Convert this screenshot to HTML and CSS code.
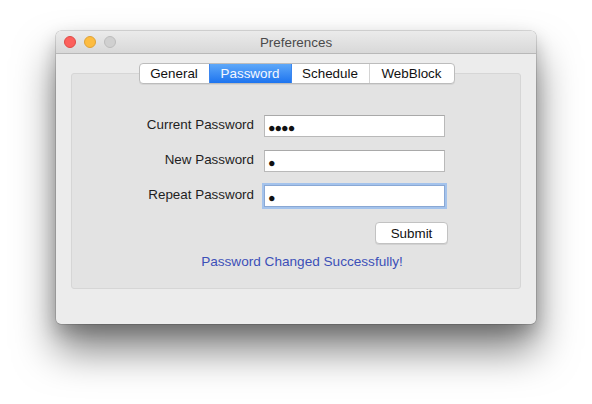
FILE: index.html
```html
<!DOCTYPE html>
<html>
<head>
<meta charset="utf-8">
<link rel="stylesheet" href="styles.css">
</head>
<body>
<div class="window">
  <div class="titlebar">
    <div class="lights">
      <span class="light red"></span>
      <span class="light yellow"></span>
      <span class="light gray"></span>
    </div>
    <div class="title">Preferences</div>
  </div>
  <div class="content">
    <div class="box">
      <div class="tabs">
        <div class="tab t-general">General</div>
        <div class="tab t-password active">Password</div>
        <div class="tab t-schedule">Schedule</div>
        <div class="tab t-webblock">WebBlock</div>
      </div>
      <div class="form">
        <label class="label">Current Password</label>
        <div class="input"><span class="dots">●●●●</span></div>
        <label class="label">New Password</label>
        <div class="input"><span class="dots">●</span></div>
        <label class="label">Repeat Password</label>
        <div class="input focus"><span class="dots">●</span></div>
      </div>
      <div class="actions">
        <button class="submit">Submit</button>
      </div>
      <div class="status">Password Changed Successfully!</div>
    </div>
  </div>
</div>
</body>
</html>
```
FILE: styles.css
```css
html, body {
  margin: 0;
  padding: 0;
  background: #ffffff;
  width: 592px;
  height: 404px;
  overflow: hidden;
}
body {
  padding: 31px 0 0 56px;
  box-sizing: border-box;
  font-family: "Liberation Sans", Arial, sans-serif;
  font-size: 13.4px;
  color: #1a1a1a;
}
.window {
  width: 480px;
  height: 293px;
  background: #ececec;
  border-radius: 5px;
  box-shadow: 0 0 0 0.5px rgba(0,0,0,0.25), 0 26px 40px rgba(0,0,0,0.5), 0 8px 18px rgba(0,0,0,0.2);
  overflow: hidden;
  display: flex;
  flex-direction: column;
}
.titlebar {
  height: 22px;
  flex: none;
  background: linear-gradient(#ebebeb, #d8d8d8);
  border-bottom: 1px solid #b8b8b8;
  position: relative;
  display: flex;
  align-items: center;
  justify-content: center;
}
.lights {
  position: absolute;
  left: 8px;
  top: 5px;
  display: flex;
  gap: 8px;
}
.light {
  width: 12px;
  height: 12px;
  border-radius: 50%;
  box-sizing: border-box;
}
.red { background: #fc605c; border: 1px solid #de4a45; }
.yellow { background: #fdbc40; border: 1px solid #dea236; }
.gray { background: #d0d0d0; border: 1px solid #bcbcbc; }
.title {
  color: #4a4a4a;
  font-size: 13.4px;
  margin-top: 1px;
}
.content {
  padding: 19px 15px 0 15px;
}
.box {
  height: 216px;
  box-sizing: border-box;
  background: #e3e3e3;
  border: 1px solid #d6d6d6;
  border-radius: 3px;
  display: flex;
  flex-direction: column;
}
.tabs {
  align-self: center;
  margin-top: -11px;
  margin-left: 1px;
  display: flex;
  height: 21px;
  box-sizing: border-box;
  border: 1px solid #bcbcbc;
  border-radius: 4px;
  background: #ffffff;
  overflow: hidden;
  box-shadow: 0 1px 0 rgba(0,0,0,0.06);
}
.tab {
  display: flex;
  align-items: center;
  justify-content: center;
  color: #111;
  border-left: 1px solid #d4d4d4;
}
.tab:first-child { border-left: none; }
.t-general { width: 69px; }
.t-password { width: 81px; }
.t-schedule { width: 77px; }
.t-webblock { width: 84px; }
.tab.active {
  background: linear-gradient(#5ea8f9, #1d74ef);
  color: #f4f8ff;
  border-left-color: #3b86f0;
}
.tab.active + .tab { border-left-color: #3b86f0; }
.form {
  margin-top: 31px;
  display: grid;
  grid-template-columns: 182px 181px;
  column-gap: 10px;
  row-gap: 13px;
  align-items: center;
}
.label {
  text-align: right;
  color: #1e1e1e;
  margin-top: -3px;
}
.input {
  height: 22px;
  box-sizing: border-box;
  background: #ffffff;
  border: 1px solid #b9b9b9;
  border-top-color: #a9a9a9;
  display: flex;
  align-items: center;
  padding-left: 3px;
}
.input.focus {
  border: 1px solid #8aa8d4;
  box-shadow: 0 0 0 2px #a4c3ec;
}
.dots {
  font-size: 12.5px;
  letter-spacing: -1px;
  color: #111;
  margin-top: 3px;
}
.actions {
  display: flex;
  justify-content: flex-end;
  padding-right: 72px;
  margin-top: 15px;
}
.submit {
  width: 73px;
  height: 22px;
  background: #ffffff;
  border: 1px solid #c2c2c2;
  border-radius: 4px;
  font-family: "Liberation Sans", Arial, sans-serif;
  font-size: 13.4px;
  color: #111;
  padding: 0;
  box-shadow: 0 1px 0 rgba(0,0,0,0.08);
}
.status {
  text-align: center;
  margin-top: 10px;
  padding-left: 12px;
  color: #3c50b8;
  font-size: 13.6px;
}
```
